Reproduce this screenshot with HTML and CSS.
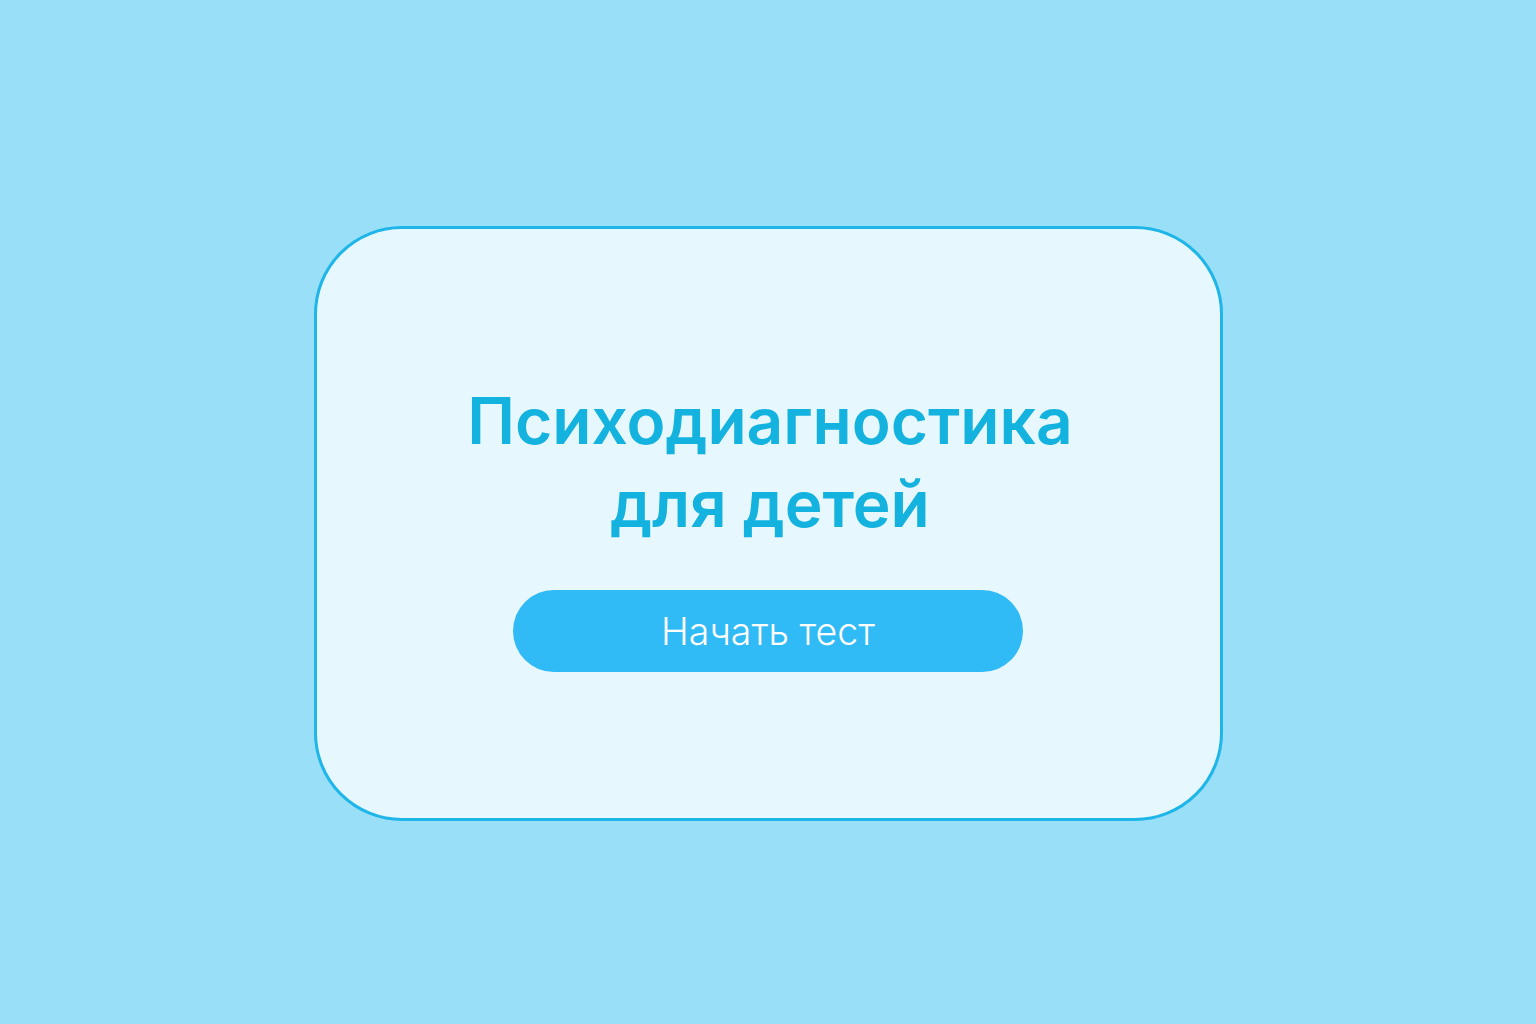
FILE: index.html
```html
<!DOCTYPE html>
<html lang="ru">
<head>
<meta charset="utf-8">
<title>Психодиагностика для детей</title>
<link rel="stylesheet" href="styles.css">
</head>
<body>
<main class="page">
  <section class="card">
    <h1 class="title">Психодиагностика<br>для детей</h1>
    <button class="start">Начать тест</button>
  </section>
</main>
</body>
</html>
```

FILE: styles.css
```css
html, body {
  margin: 0;
  padding: 0;
  height: 100%;
}
body {
  background: #9adff8;
  font-family: "Liberation Sans", Arial, sans-serif;
}
.page {
  display: flex;
  justify-content: center;
  padding-top: 226px;
}
.card {
  box-sizing: border-box;
  width: 909px;
  height: 595px;
  border: 3px solid #1eb5e9;
  border-radius: 88px;
  background: #e6f7fd;
  display: flex;
  flex-direction: column;
  align-items: center;
  padding-top: 150px;
}
.title {
  margin: 0;
  padding-left: 4px;
  font-family: Inter, "Liberation Sans", sans-serif;
  font-weight: 600;
  font-size: 64px;
  line-height: 83px;
  color: #14b2df;
  text-align: center;
}
.start {
  margin-top: 45px;
  width: 510px;
  height: 82px;
  border: none;
  border-radius: 41px;
  background: #30baf6;
  color: #ffffff;
  font-family: Inter, "Noto Sans", sans-serif;
  font-weight: 300;
  font-size: 37.5px;
  cursor: pointer;
}
```
